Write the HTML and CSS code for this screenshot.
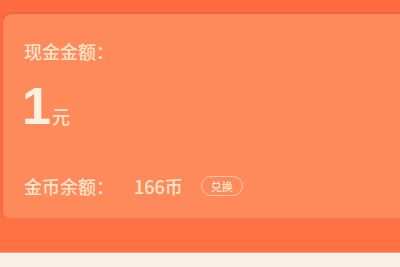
FILE: index.html
```html
<!DOCTYPE html>
<html lang="zh">
<head>
    <meta charset="UTF-8">
    <meta name="viewport" content="width=device-width, initial-scale=1.0">
    <title>现金金额</title>
    <link rel="stylesheet" href="styles.css">
</head>
<body>
    <div class="top">
        <div class="card">
            <div class="label">现金金额：</div>
            <div class="amount"><span class="num">1</span><span class="unit">元</span></div>
            <div class="coins">
                <span>金币余额：</span><span class="coin-num">166币</span>
                <button class="exchange">兑换</button>
            </div>
        </div>
    </div>
    <div class="band"></div>
    <div class="rest"></div>
</body>
</html>
```

FILE: styles.css
```css
body {
    margin: 0;
    font-family: "Noto Sans CJK SC", "Noto Sans", sans-serif;
    background-color: #f8f0e4;
    color: #fde4c8;
    overflow: hidden;
}
.top {
    background-color: #fe6a42;
    padding: 14px 0 0 3px;
}
.card {
    background-color: #fe8a5c;
    border-radius: 9px 0 0 6px;
    height: 204px;
    padding: 0 0 0 21px;
    box-sizing: border-box;
    box-shadow: 0 -1px 2px rgba(200, 60, 30, 0.25);
}
.label {
    padding-top: 24px;
    font-size: 18px;
    font-weight: 500;
    line-height: 26px;
}
.amount {
    margin-top: 12px;
    display: flex;
    align-items: baseline;
    height: 58px;
}
.num {
    font-family: "Liberation Sans", sans-serif;
    font-size: 52px;
    font-weight: bold;
    color: #fff1e2;
    margin-left: -2px;
}
.unit {
    font-size: 18px;
    font-weight: 500;
    margin-left: 1px;
}
.coins {
    margin-top: 40px;
    display: flex;
    align-items: center;
    font-size: 18px;
    font-weight: 500;
    line-height: 24px;
}
.coin-num {
    margin-left: 20px;
}
.exchange {
    margin-left: 18px;
    font-family: inherit;
    font-size: 11px;
    font-weight: 500;
    line-height: 16px;
    padding: 1px 9px;
    color: #fde4c8;
    background: transparent;
    border: 1px solid #fdc7a4;
    border-radius: 10px;
}
.band {
    height: 34px;
    background-color: #fd7145;
    border-bottom: 1px solid #f0a08a;
}
.rest {
    height: 20px;
}
```
